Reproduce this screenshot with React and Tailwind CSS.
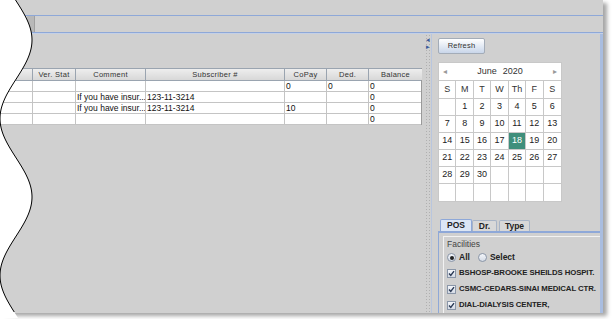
import React from 'react';

const COLS = 'grid grid-cols-[33px_43px_70px_139px_42px_42px_53px]';

const headers = ['', 'Ver. Stat', 'Comment', 'Subscriber #', 'CoPay', 'Ded.', 'Balance'];

const rows = [
  ['', '', '', '', '0', '0', '0'],
  ['', '', 'If you have insur...', '123-11-3214', '', '', '0'],
  ['', '', 'If you have insur...', '123-11-3214', '10', '', '0'],
  ['', '', '', '', '', '', '0'],
];

const weeks = [
  ['', '1', '2', '3', '4', '5', '6'],
  ['7', '8', '9', '10', '11', '12', '13'],
  ['14', '15', '16', '17', '18', '19', '20'],
  ['21', '22', '23', '24', '25', '26', '27'],
  ['28', '29', '30', '', '', '', ''],
  ['', '', '', '', '', '', ''],
];

const facilities = [
  'BSHOSP-BROOKE SHEILDS HOSPIT.',
  'CSMC-CEDARS-SINAI MEDICAL CTR.',
  'DIAL-DIALYSIS CENTER,',
];

// torn left edge of the screenshot
const waveX = (y) => 16 + 16 * Math.cos((2 * Math.PI * (y - 40)) / 157);

const TornEdge = () => {
  const pts = [];
  for (let y = 0; y <= 319; y += 2) pts.push(`${waveX(y).toFixed(2)},${y}`);
  const line = [];
  for (let y = 0; y <= 313; y += 2) line.push(`${waveX(y).toFixed(2)},${y}`);
  return (
    <svg className="absolute left-0 top-0" width="40" height="319" viewBox="0 0 40 319">
      <path d={`M0,0 L${pts.join(' L')} L0,319 Z`} fill="#ffffff" />
      <path d={`M${line.join(' L')}`} fill="none" stroke="#000" strokeWidth="1" />
    </svg>
  );
};

const ResultsTable = () => (
  <div className="w-[422px] bg-white border-r border-[#9a9a9a]">
    <div className={`${COLS} h-[13px] border-t border-b border-[#9aa4b0]`}>
      {headers.map((h, i) => (
        <div
          key={i}
          className="border-r border-[#9aa4b0] last:border-r-0 bg-gradient-to-b from-[#eeeeee] to-[#d8d8d8] flex items-center justify-center text-[7.5px] tracking-[0.3px] text-[#333]"
        >
          {h}
        </div>
      ))}
    </div>
    {rows.map((r, ri) => (
      <div key={ri} className={`${COLS} h-[11px] border-b border-[#c4c4c4]`}>
        {r.map((c, ci) => (
          <div
            key={ci}
            className="border-r border-[#c4c4c4] last:border-r-0 flex items-center pl-[1px] text-[8.5px] text-[#111] whitespace-nowrap overflow-hidden leading-none"
          >
            {c}
          </div>
        ))}
      </div>
    ))}
  </div>
);

const Calendar = () => (
  <div className="w-[124px] bg-white border border-[#c8c8c8]">
    <div className="h-[18px] flex items-center justify-between px-[4px] border-b border-[#c8c8c8] text-[9px] text-[#333]">
      <span className="text-[#999] text-[8px]">◂</span>
      <span className="flex gap-[6px]">
        <span>June</span>
        <span>2020</span>
      </span>
      <span className="text-[#999] text-[8px]">▸</span>
    </div>
    <div className="grid grid-cols-7 h-[18px] border-b border-[#c8c8c8]">
      {['S', 'M', 'T', 'W', 'Th', 'F', 'S'].map((d, i) => (
        <div key={i} className="border-r border-[#c8c8c8] last:border-r-0 flex items-center justify-center text-[9px] text-[#333]">
          {d}
        </div>
      ))}
    </div>
    {weeks.map((w, wi) => (
      <div key={wi} className="grid grid-cols-7 h-[17px] border-b border-[#c8c8c8] last:border-b-0">
        {w.map((d, di) => (
          <div
            key={di}
            className={
              d === '18'
                ? 'bg-[#3f8f7c] text-white border-r border-[#c8c8c8] flex items-center justify-center text-[9px]'
                : 'border-r border-[#c8c8c8] last:border-r-0 flex items-center justify-center text-[9px] text-[#222]'
            }
          >
            {d}
          </div>
        ))}
      </div>
    ))}
  </div>
);

const Radio = ({ checked }) => (
  <span className="w-[9px] h-[9px] rounded-full border border-[#8a96a8] bg-gradient-to-b from-[#f4f6fa] to-[#d4dbe6] flex items-center justify-center">
    {checked && <span className="w-[4px] h-[4px] rounded-full bg-[#222]" />}
  </span>
);

const Check = () => (
  <span className="shrink-0 w-[9px] h-[9px] border border-[#8a96a8] bg-gradient-to-b from-[#f4f6fa] to-[#d4dbe6] flex items-center justify-center">
    <svg width="7" height="7" viewBox="0 0 7 7">
      <path d="M1 3.5 L2.8 5.5 L6 1.2" fill="none" stroke="#2b3a55" strokeWidth="1.4" />
    </svg>
  </span>
);

const SidePanel = () => (
  <div className="flex-1 flex flex-col border-l border-[#b9c6de] border-r-[3px] border-r-[#a9bde0] pl-[6px] pt-[4px] overflow-hidden">
    <button className="w-[47px] h-[16px] rounded-[2px] border border-[#a3acb8] bg-gradient-to-b from-[#ffffff] to-[#c9d6ea] text-[7.5px] text-[#333] tracking-[0.2px]">
      Refresh
    </button>
    <div className="mt-[8px]">
      <Calendar />
    </div>
    <div className="mt-[17px] flex pl-[2px] h-[12px] items-end">
      <div className="w-[32px] h-[12px] border border-b-0 border-[#8ea8d8] bg-[#dce6f5] rounded-t-[2px] flex items-center justify-center text-[8.5px] font-bold text-[#222]">
        POS
      </div>
      <div className="w-[25px] h-[11px] border border-b-0 border-[#a8b4c6] bg-[#d8d8d8] rounded-t-[2px] flex items-center justify-center text-[8.5px] font-bold text-[#222]">
        Dr.
      </div>
      <div className="ml-[2px] w-[31px] h-[11px] border border-b-0 border-[#a8b4c6] bg-[#d8d8d8] rounded-t-[2px] flex items-center justify-center text-[8.5px] font-bold text-[#222]">
        Type
      </div>
    </div>
    <div className="flex-1 border-t-[2px] border-l border-[#8ea8d8] pl-[4px] pt-[3px] overflow-hidden">
      <div className="h-full border-l border-t border-[#f2f2f2] pl-[3px] pt-[2px] flex flex-col">
        <div className="text-[8.5px] text-[#444] leading-[11px]">Facilities</div>
        <div className="h-[16px] flex items-center gap-[3px] text-[8.5px] font-bold text-[#222]">
          <Radio checked />
          <span>All</span>
          <span className="ml-[2px]" />
          <Radio />
          <span>Select</span>
        </div>
        {facilities.map((f) => (
          <div key={f} className="h-[17px] flex items-center gap-[3px] text-[7.8px] tracking-[-0.1px] font-bold text-[#222] whitespace-nowrap">
            <Check />
            <span>{f}</span>
          </div>
        ))}
      </div>
    </div>
  </div>
);

export default function App() {
  return (
    <div className="relative w-[614px] h-[319px] bg-white overflow-hidden font-['Liberation_Sans',Arial,sans-serif]">
      <div className="w-[603px] h-[313px] bg-[#d0d0d0] shadow-[4px_3px_4px_rgba(0,0,0,0.35)] flex flex-col">
        <div className="h-[16px] shrink-0 border-b border-[#8ea8d8]" />
        <div className="h-[17px] shrink-0 border-b border-[#8ea8d8] flex items-stretch">
          <div className="ml-[27px] w-[8px] bg-[#b8b8b8] border-r border-[#a0a0a0]" />
        </div>
        <div className="flex-1 min-h-0 flex border-t border-[#c4d0e6]">
          <div className="w-[425px] pt-[34px]">
            <ResultsTable />
          </div>
          <div className="w-[6px] flex flex-col items-center pt-[2px] bg-[radial-gradient(#b0b0b0_0.6px,transparent_0.8px)] bg-[length:3px_3px]">
            <span className="text-[7px] leading-[7px] text-[#3a5a9a]">◂</span>
            <span className="text-[7px] leading-[7px] text-[#3a5a9a]">▸</span>
          </div>
          <SidePanel />
        </div>
      </div>
      <TornEdge />
    </div>
  );
}
